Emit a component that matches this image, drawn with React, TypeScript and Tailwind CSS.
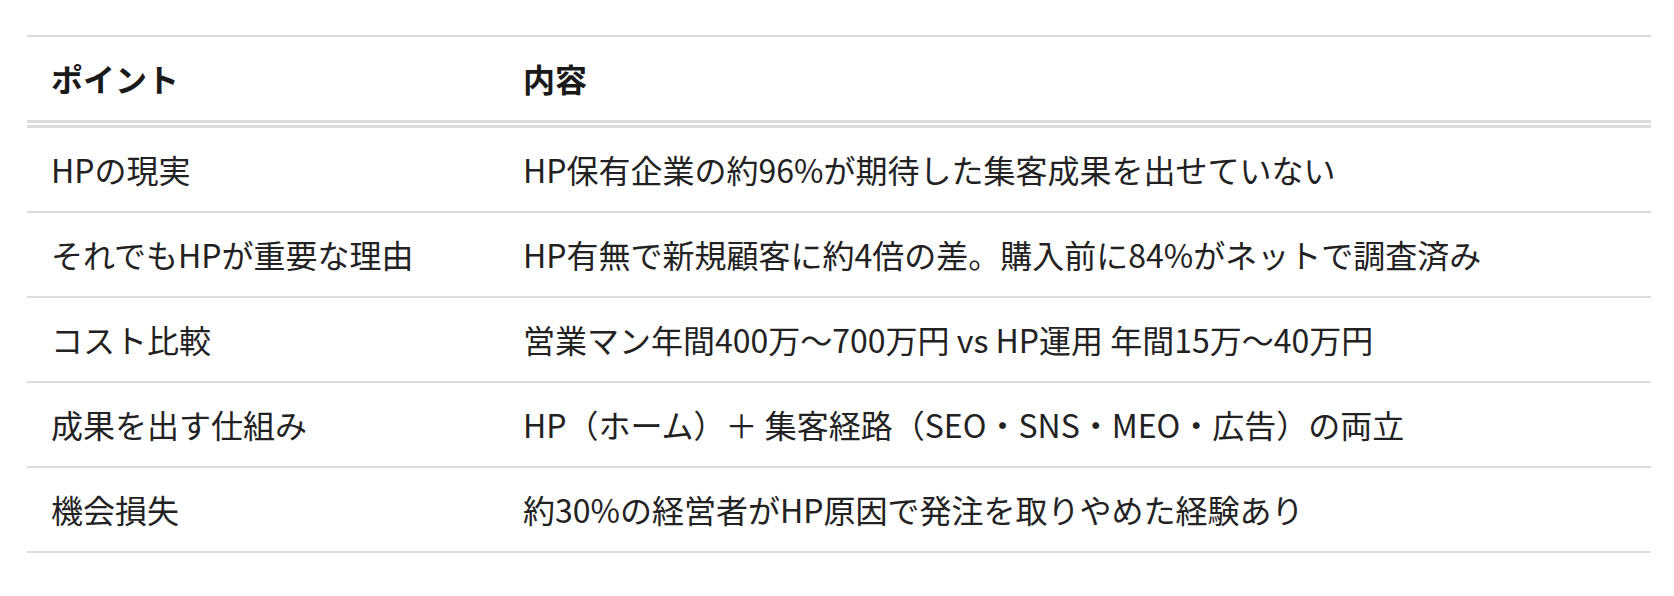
const rows = [
  { point: 'HPの現実', detail: 'HP保有企業の約96%が期待した集客成果を出せていない' },
  { point: 'それでもHPが重要な理由', detail: 'HP有無で新規顧客に約4倍の差。購入前に84%がネットで調査済み' },
  { point: 'コスト比較', detail: '営業マン年間400万〜700万円 vs HP運用 年間15万〜40万円' },
  { point: '成果を出す仕組み', detail: 'HP（ホーム）＋ 集客経路（SEO・SNS・MEO・広告）の両立' },
  { point: '機会損失', detail: '約30%の経営者がHP原因で発注を取りやめた経験あり' },
]

export default function App() {
  return (
    <main
      className="min-h-[596px] w-full bg-white pl-[27px] pr-[23px] pt-[35px] text-[#222]"
      style={{ fontFamily: '"Noto Sans CJK JP", "Noto Sans", sans-serif' }}
    >
      <table className="w-full border-collapse text-left text-[32px]">
        <thead>
          <tr className="border-t-2 border-b-[8px] border-double border-t-[#dcdcdc] border-b-[#dcdcdc]">
            <th className="w-[472px] px-6 py-[17px] text-left font-bold leading-[49px] text-[#1a1a1a]">ポイント</th>
            <th className="px-6 py-[17px] text-left font-bold leading-[49px] text-[#1a1a1a]">内容</th>
          </tr>
        </thead>
        <tbody>
          {rows.map((row) => (
            <tr key={row.point} className="border-b-2 border-[#dcdcdc]">
              <td className="px-6 py-[17px] leading-[49px]">{row.point}</td>
              <td className="px-6 py-[17px] leading-[49px]">{row.detail}</td>
            </tr>
          ))}
        </tbody>
      </table>
    </main>
  )
}
